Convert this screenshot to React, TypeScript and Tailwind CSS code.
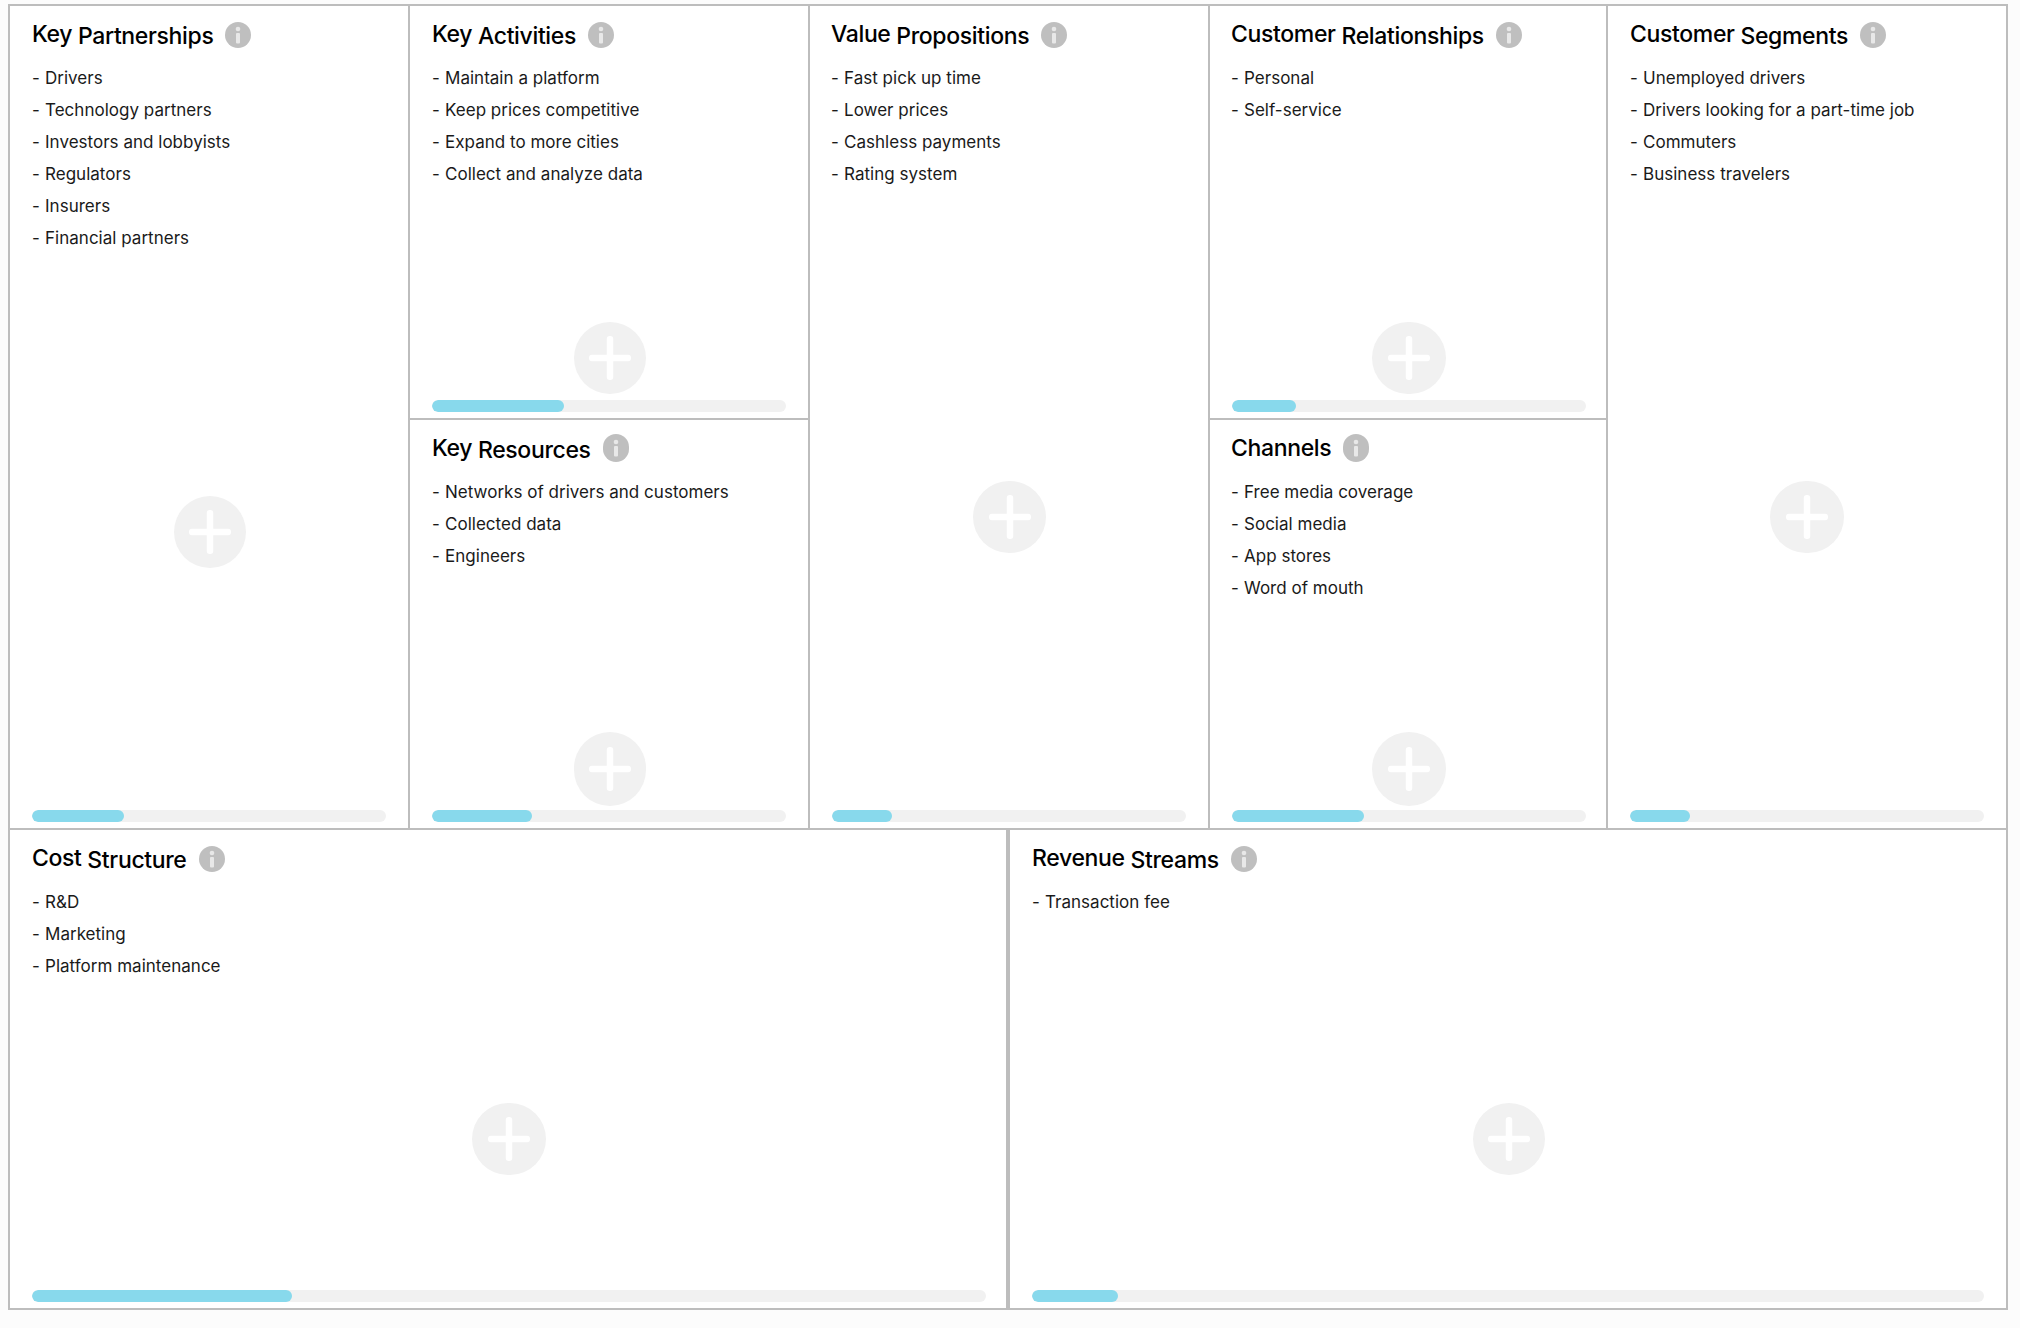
import React from "react";

const font = "font-['Inter','Liberation_Sans',sans-serif]";

function Info({ tall }: { tall?: boolean }) {
  return (
    <span
      className={
        "ml-3 flex w-[26px] shrink-0 items-center justify-center rounded-full bg-[#bfbfbf] " +
        (tall ? "-mt-px h-[28px]" : "mt-px h-[26px]")
      }
    >
      <svg width="26" height="26" viewBox="0 0 26 26">
        <circle cx="13" cy="7" r="2.3" fill="#e8e8e8" />
        <rect x="11" y="11" width="4" height="10.5" rx="1" fill="#e8e8e8" />
      </svg>
    </span>
  );
}

function Plus({ at }: { at: [number, number, number, number] }) {
  const [left, top, width, height] = at;
  return (
    <div
      className="absolute flex items-center justify-center rounded-full bg-[#f1f1f1]"
      style={{ left, top, width, height }}
    >
      <svg width="44" height="44" viewBox="0 0 44 44">
        <rect x="18.75" y="0" width="6.5" height="44" rx="3" fill="#fff" />
        <rect x="1" y="18.75" width="42" height="6.5" rx="3" fill="#fff" />
      </svg>
    </div>
  );
}

function Cell({
  title,
  items,
  fill,
  plus,
  className,
  tallInfo,
  textClass = "",
}: {
  title: string;
  items: string[];
  fill: number;
  plus: [number, number, number, number];
  className: string;
  tallInfo?: boolean;
  textClass?: string;
}) {
  const [first, ...rest] = title.split(" ");
  return (
    <section className={"relative flex flex-col bg-white px-[22px] pb-[6px] " + className}>
      <div className={"flex flex-1 flex-col " + textClass}>
        <h2 className="flex h-[46px] items-start pt-[15px] text-[23px] font-medium leading-[30px] tracking-[-0.35px] text-black">
          <span>
            <span className="relative -top-[2px]">{first}</span>
            {rest.length ? " " + rest.join(" ") : ""}
          </span>
          <Info tall={tallInfo} />
        </h2>
        <ul className="mt-[10px] flex-1 text-[17px] leading-[32px] tracking-[0.02px] text-[#1a1a1a]">
          {items.map((t) => (
            <li key={t} className="flex">
              <span className="w-[13px]">-</span>
              <span>{t}</span>
            </li>
          ))}
        </ul>
      </div>
      <Plus at={plus} />
      <div className="h-3 overflow-hidden rounded-md bg-[#f1f1f1]">
        <div className="h-full rounded-md bg-[#88d9ec]" style={{ width: fill }} />
      </div>
    </section>
  );
}

export default function App() {
  return (
    <div className={"h-[1328px] w-[2020px] bg-[#fcfcfc] pl-2 pt-1 " + font}>
      <div className="flex h-[1306px] w-[2000px] flex-col border-2 border-[#bdbdbd]">
        <div className="flex h-[824px] border-b-2 border-[#bdbdbd]">
          <Cell
            className="w-[400px] border-r-2 border-[#bdbdbd]"
            title="Key Partnerships"
            items={["Drivers", "Technology partners", "Investors and lobbyists", "Regulators", "Insurers", "Financial partners"]}
            fill={92}
            plus={[164, 490, 72, 72]}
          />
          <div className="flex w-[400px] flex-col border-r-2 border-[#bdbdbd]">
            <Cell
              className="h-[414px] border-b-2 border-[#bdbdbd]"
              title="Key Activities"
              items={["Maintain a platform", "Keep prices competitive", "Expand to more cities", "Collect and analyze data"]}
              fill={132}
              plus={[164, 316, 72, 72]}
            />
            <Cell
              className="flex-1"
              title="Key Resources"
              items={["Networks of drivers and customers", "Collected data", "Engineers"]}
              fill={100}
              plus={[164, 312, 72, 74]}
              tallInfo
            />
          </div>
          <Cell
            className="w-[400px] border-r-2 border-[#bdbdbd]"
            textClass="-ml-px"
            title="Value Propositions"
            items={["Fast pick up time", "Lower prices", "Cashless payments", "Rating system"]}
            fill={60}
            plus={[163, 475, 73, 72]}
          />
          <div className="flex w-[398px] flex-col border-r-2 border-[#bdbdbd]">
            <Cell
              className="h-[414px] border-b-2 border-[#bdbdbd] pr-[20px]"
              textClass="-ml-px"
              title="Customer Relationships"
              items={["Personal", "Self-service"]}
              fill={64}
              plus={[162, 316, 74, 72]}
            />
            <Cell
              className="flex-1 pr-[20px]"
              textClass="-ml-px"
              title="Channels"
              items={["Free media coverage", "Social media", "App stores", "Word of mouth"]}
              fill={132}
              plus={[162, 312, 74, 74]}
              tallInfo
            />
          </div>
          <Cell
            className="min-w-0 flex-1"
            title="Customer Segments"
            items={["Unemployed drivers", "Drivers looking for a part-time job", "Commuters", "Business travelers"]}
            fill={60}
            plus={[162, 475, 74, 72]}
          />
        </div>
        <div className="flex flex-1">
          <Cell
            className="w-[998px] border-r-2 border-[#bdbdbd] pr-[20px]"
            title="Cost Structure"
            items={["R&D", "Marketing", "Platform maintenance"]}
            fill={260}
            plus={[462, 273, 74, 72]}
          />
          <Cell
            className="min-w-0 flex-1 border-l-2 border-[#bdbdbd]"
            title="Revenue Streams"
            items={["Transaction fee"]}
            fill={86}
            plus={[463, 273, 72, 72]}
          />
        </div>
      </div>
    </div>
  );
}
